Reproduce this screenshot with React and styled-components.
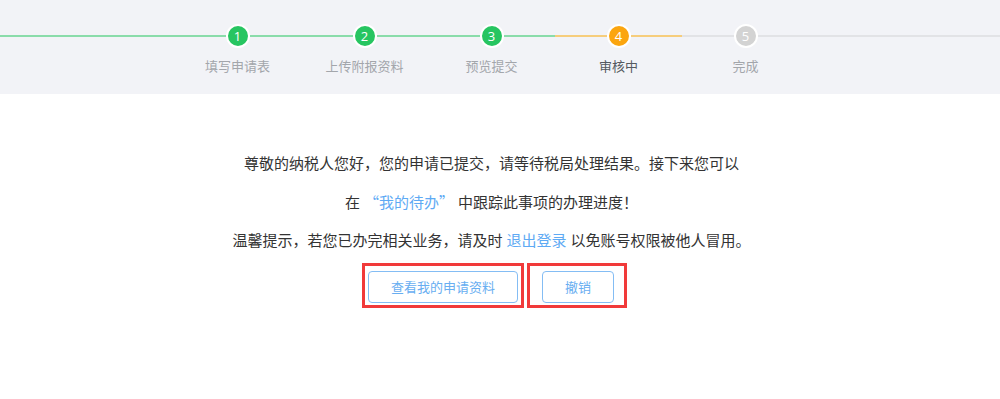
import styled, { createGlobalStyle } from "styled-components";

const GlobalStyle = createGlobalStyle`
  html, body {
    margin: 0;
    padding: 0;
    background: #ffffff;
    font-family: "Noto Sans CJK SC", "Noto Sans", "Liberation Sans", sans-serif;
  }
`;

const steps = [
  { num: 1, label: "填写申请表", state: "done" },
  { num: 2, label: "上传附报资料", state: "done" },
  { num: 3, label: "预览提交", state: "done" },
  { num: 4, label: "审核中", state: "active" },
  { num: 5, label: "完成", state: "todo" },
];

const circleColors = { done: "#27c561", active: "#fba50f", todo: "#d3d3d3" };
const lineColors = { done: "#8adcaa", active: "#f6cd7c", todo: "#e2e3e6" };

const Page = styled.div`
  width: 1000px;
`;

const Header = styled.div`
  height: 94px;
  box-sizing: border-box;
  background: #f2f3f7;
  padding-top: 24px;
  display: flex;
  align-items: flex-start;
`;

const Filler = styled.div`
  flex: ${(p) => (p.$fixed ? "0 0 174px" : "1")};
  height: 24px;
  display: flex;
  align-items: center;
`;

const Line = styled.div`
  flex: 1;
  height: 2px;
  background: ${(p) => lineColors[p.$state]};
`;

const Step = styled.div`
  flex: 0 0 127px;
  display: flex;
  flex-direction: column;
  align-items: center;
`;

const Track = styled.div`
  width: 100%;
  height: 24px;
  display: flex;
  align-items: center;
`;

const Circle = styled.div`
  width: 20px;
  height: 20px;
  border: 2px solid #ffffff;
  border-radius: 50%;
  background: ${(p) => circleColors[p.$state]};
  color: #ffffff;
  font-size: 13px;
  line-height: 20px;
  text-align: center;
  font-family: "Open Sans", "Noto Sans", sans-serif;
`;

const StepLabel = styled.div`
  margin-top: 9px;
  font-size: 13px;
  line-height: 18px;
  color: ${(p) => (p.$state === "active" ? "#555a60" : "#a3a6ab")};
  white-space: nowrap;
`;

const Content = styled.div`
  width: 983px;
  padding-top: 50px;
  display: flex;
  flex-direction: column;
  align-items: center;
`;

const Paragraph = styled.p`
  margin: 0;
  font-size: 15px;
  line-height: 38.5px;
  color: #333333;
  text-align: center;
`;

const Link = styled.span`
  color: #5eaaf4;
  margin: 0 4px;
`;

const ButtonRow = styled.div`
  margin-top: 3px;
  margin-left: 6px;
  display: flex;
  gap: 3px;
`;

const Highlight = styled.div`
  border: 3px solid #f13a3a;
  padding: 5px ${(p) => p.$padR}px 2px ${(p) => p.$padL}px;
`;

const Button = styled.button`
  height: 32px;
  padding: 0 22px;
  border: 1px solid #84bdf4;
  border-radius: 4px;
  background: #ffffff;
  color: #68aef1;
  font-size: 13px;
  font-family: "Noto Sans CJK SC", sans-serif;
  cursor: pointer;
`;

export default function App() {
  return (
    <Page>
      <GlobalStyle />
      <Header>
        <Filler $fixed>
          <Line $state="done" />
        </Filler>
        {steps.map((s) => (
          <Step key={s.num}>
            <Track>
              <Line $state={s.state} />
              <Circle $state={s.state}>{s.num}</Circle>
              <Line $state={s.state} />
            </Track>
            <StepLabel $state={s.state}>{s.label}</StepLabel>
          </Step>
        ))}
        <Filler>
          <Line $state="todo" />
        </Filler>
      </Header>
      <Content>
        <Paragraph>尊敬的纳税人您好，您的申请已提交，请等待税局处理结果。接下来您可以</Paragraph>
        <Paragraph>
          在<Link>“我的待办”</Link>中跟踪此事项的办理进度！
        </Paragraph>
        <Paragraph>
          温馨提示，若您已办完相关业务，请及时<Link>退出登录</Link>以免账号权限被他人冒用。
        </Paragraph>
        <ButtonRow>
          <Highlight $padL={3} $padR={3}>
            <Button>查看我的申请资料</Button>
          </Highlight>
          <Highlight $padL={12} $padR={10}>
            <Button>撤销</Button>
          </Highlight>
        </ButtonRow>
      </Content>
    </Page>
  );
}
